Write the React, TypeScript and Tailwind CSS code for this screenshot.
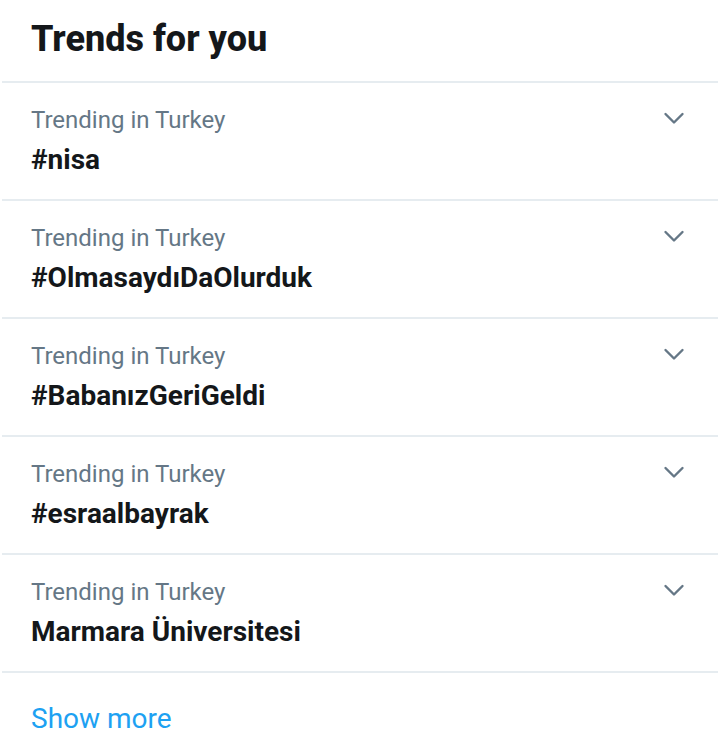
import React from "react";

const trends = [
  "#nisa",
  "#OlmasaydıDaOlurduk",
  "#BabanızGeriGeldi",
  "#esraalbayrak",
  "Marmara Üniversitesi",
];

function Chevron() {
  return (
    <svg width="24" height="16" viewBox="0 0 24 16" className="shrink-0">
      <path d="M3.5 3 L12 11.5 L20.5 3" fill="none" stroke="#657786" strokeWidth="2.4" strokeLinecap="round" strokeLinejoin="round" />
    </svg>
  );
}

export default function App() {
  return (
    <div className="w-[720px] h-[740px] bg-white px-[2px] overflow-hidden" style={{ fontFamily: "Roboto, 'Liberation Sans', sans-serif" }}>
      <div className="h-[83px] pl-[29px] pt-[18px] border-b-2 border-[#e6ecf0]">
        <h1 className="text-[36px] leading-[42px] font-extrabold text-[#14171a]">Trends for you</h1>
      </div>
      {trends.map((t) => (
        <div key={t} className="h-[118px] border-b-2 border-[#e6ecf0] pl-[29px] pr-[32px] flex justify-between">
          <div className="pt-[22px]">
            <div className="text-[24px] leading-[30px] text-[#657786]">Trending in Turkey</div>
            <div className="mt-[10px] text-[28px] leading-[30px] font-bold text-[#14171a]">{t}</div>
          </div>
          <div className="pt-[28px]">
            <Chevron />
          </div>
        </div>
      ))}
      <div className="pl-[29px] pt-[31px]">
        <div className="text-[28px] leading-[30px] text-[#1da1f2]">Show more</div>
      </div>
    </div>
  );
}
